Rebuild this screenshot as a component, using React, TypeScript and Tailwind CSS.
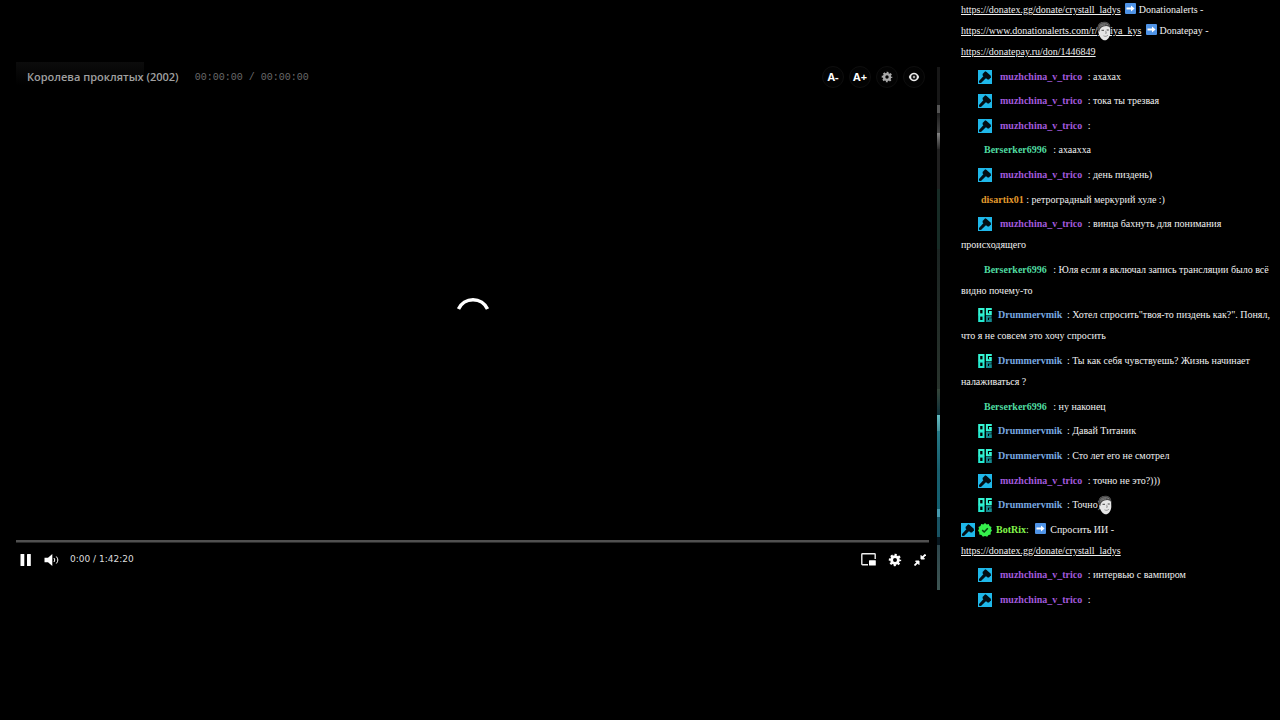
import React from 'react';
import clsx from 'clsx';

type User = 'muzhchina_v_trico' | 'Berserker6996' | 'disartix01' | 'Drummervmik';

interface Message {
  user: User;
  text: string;
  emote?: boolean;
}

const messages: Message[] = [
  { user: 'muzhchina_v_trico', text: 'ахахах' },
  { user: 'muzhchina_v_trico', text: 'тока ты трезвая' },
  { user: 'muzhchina_v_trico', text: '' },
  { user: 'Berserker6996', text: 'ахаахха' },
  { user: 'muzhchina_v_trico', text: 'день пиздень)' },
  { user: 'disartix01', text: 'ретроградный меркурий хуле :)' },
  { user: 'muzhchina_v_trico', text: 'винца бахнуть для понимания происходящего' },
  { user: 'Berserker6996', text: 'Юля если я включал запись трансляции было всё видно почему-то' },
  { user: 'Drummervmik', text: 'Хотел спросить"твоя-то пиздень как?". Понял, что я не совсем это хочу спросить' },
  { user: 'Drummervmik', text: 'Ты как себя чувствуешь? Жизнь начинает налаживаться ?' },
  { user: 'Berserker6996', text: 'ну наконец' },
  { user: 'Drummervmik', text: 'Давай Титаник' },
  { user: 'Drummervmik', text: 'Сто лет его не смотрел' },
  { user: 'muzhchina_v_trico', text: 'точно не это?)))' },
  { user: 'Drummervmik', text: 'Точно)', emote: true },
];

const lastMessages: Message[] = [
  { user: 'muzhchina_v_trico', text: 'интервью с вампиром' },
  { user: 'muzhchina_v_trico', text: '' },
];

const nameStyles: Record<User, string> = {
  muzhchina_v_trico: 'text-[#a259dc] ml-2 mr-[3px]',
  Berserker6996: 'text-[#4fdca0] ml-[23px] mr-1',
  disartix01: 'text-[#e39a2d] ml-5',
  Drummervmik: 'text-[#78a8e0] ml-1.5 mr-0.5',
};

function GavelBadge({ className }: { className?: string }) {
  return (
    <svg viewBox="0 0 14 14" className={clsx('inline-block size-3.5 align-[-4px]', className)} aria-label="Moderator">
      <rect width="14" height="14" fill="#1fb8ea" />
      <g fill="#020d13">
        <path d="M7.2 1.2 8.6 2 12.8 5.8 12.9 7.2 11 9.6 9.6 9.6 4.6 5.4 4.6 4Z" />
        <path d="M6 5.6 8.4 7.8 3 13 1 12.8 1 11Z" />
      </g>
    </svg>
  );
}

function OgBadge({ className }: { className?: string }) {
  return (
    <svg viewBox="0 0 14 14" className={clsx('inline-block size-3.5 align-[-4px]', className)} aria-label="OG">
      <g fill="none" strokeWidth="2">
        <rect x="1.2" y="1" width="4.3" height="5.4" stroke="#35f5d4" />
        <rect x="1.2" y="7.6" width="4.3" height="5.4" stroke="#25ead0" />
        <path d="M13.8 1H8.9V6.2H12.8V4H11" stroke="#35f5d4" />
        <path d="M13.6 8.8H9V13H12.8V11.2H11" stroke="#148a90" />
      </g>
    </svg>
  );
}

function VerifiedBadge() {
  return (
    <svg viewBox="0 0 14 14" className="inline-block size-3.5 align-[-4px] ml-[3px]" aria-label="Verified">
      <path
        d="M7 0 8.7 1.4 10.8 1 11.5 3 13.5 4 13 6 14 7.5 12.7 9.3 12.7 11.4 10.5 12 9.2 13.8 7 13 4.9 13.8 3.5 12 1.3 11.4 1.2 9.3 0 7.5 1 6 .5 4 2.5 3 3.2 1 5.3 1.4Z"
        fill="#35ef4c"
      />
      <path d="M4.2 7.1 6.2 9 9.8 5.3" stroke="#073d0d" strokeWidth="1.5" fill="none" />
    </svg>
  );
}

function ArrowEmoji() {
  return (
    <svg viewBox="0 0 11 11" className="ml-0.5 inline-block size-[11px] align-[-1px]" aria-label="➡️">
      <rect width="11" height="11" rx="1" fill="#4f93e6" />
      <path d="M1.5 4.6H6V2.6L9.6 5.5 6 8.4V6.4H1.5Z" fill="#fff" />
    </svg>
  );
}

function FaceEmote({ className }: { className?: string }) {
  return (
    <svg viewBox="0 0 14 20" className={className} aria-label="Emote">
      <path d="M1 9C0 4 3 1 7 1S13.5 4 13.2 8L13.3 12C13 16 10.5 19.3 8 19.3 5 19.3 2.5 16 1.5 12Z" fill="#e6e6e6" />
      <path d="M1 10C-.6 4 2.5 1 7 .8 11 .7 13.6 3 13.3 7 11.5 4.8 9 4.4 6.5 5.6 4 6.6 2.5 8 2.3 11Z" fill="#484848" />
      <path d="M2.5 4.5C5 2.5 8 2.2 11 3.6M2 6.5C4 4.5 6 4 8 4" stroke="#8b8b8b" strokeWidth=".8" fill="none" />
      <path d="M4.5 9.3H7M9.7 9H11.8" stroke="#444" strokeWidth="1" />
      <path d="M8.6 9.8 9.4 12.2H8M6.5 14.8C8.3 15.8 10 15.4 11 14" stroke="#888" strokeWidth=".8" fill="none" />
    </svg>
  );
}

function GearIcon({ className }: { className?: string }) {
  return (
    <svg viewBox="0 0 14 14" className={className}>
      <g fill="none" stroke="currentColor">
        <circle cx="7" cy="7" r="5" strokeWidth="2.4" strokeDasharray="2.1 1.827" strokeDashoffset="1.05" />
        <circle cx="7" cy="7" r="3.4" strokeWidth="2.8" />
      </g>
    </svg>
  );
}

function ChatMessage({ user, text, emote }: Message) {
  return (
    <li>
      {user === 'muzhchina_v_trico' && <GavelBadge className="ml-[17px]" />}
      {user === 'Drummervmik' && <OgBadge className="ml-[17px]" />}
      <span className={clsx('font-bold', nameStyles[user])}>{user}</span>
      {' : '}
      {text}
      {emote && (
        <span className="relative">
          <FaceEmote className="absolute -left-[3px] -top-1 h-5 w-3.5" />
        </span>
      )}
    </li>
  );
}

function Chat() {
  return (
    <aside className="w-1/4 shrink-0 pl-px pr-1">
      <ul className="-mt-px flex h-[611px] flex-col justify-between font-['Liberation_Serif',serif] text-[10px] leading-[21px] text-[#f0f0f0]">
        <li>
          <a href="#donatex" className="underline">https://donatex.gg/donate/crystall_ladys</a>{' '}
          <ArrowEmoji /> Donationalerts -<br />
          <a href="#donationalerts" className="relative underline">
            https://www.donationalerts.com/r/yuliya_kys
            <FaceEmote className="absolute right-[30px] -top-1 h-5 w-3.5" />
          </a>{' '}
          <ArrowEmoji /> Donatepay -<br />
          <a href="#donatepay" className="underline">https://donatepay.ru/don/1446849</a>
        </li>
        {messages.map((message, i) => (
          <ChatMessage key={i} {...message} />
        ))}
        <li>
          <GavelBadge />
          <VerifiedBadge />
          <span className="ml-1 font-bold text-[#83f64b]">BotRix</span>
          <span className="mr-1 text-[#b5eea0]">:</span>
          <ArrowEmoji /> <span className="ml-0.5">Спросить ИИ -</span>
          <br />
          <a href="#donatex" className="underline">https://donatex.gg/donate/crystall_ladys</a>
        </li>
        {lastMessages.map((message, i) => (
          <ChatMessage key={i} {...message} />
        ))}
      </ul>
    </aside>
  );
}

const roundButton = 'flex size-[22px] items-center justify-center rounded-full border border-[#0e0e0e] bg-[#030303]';

function PlayerHeader() {
  return (
    <header className="flex h-[30px] items-center bg-[linear-gradient(#0c0c0c,#000)] bg-[length:128px_24px] bg-no-repeat pl-[11px] pr-1">
      <h1 className="font-['Open_Sans',sans-serif] text-[11px] font-semibold text-[#a0a0a0]">Королева проклятых (2002)</h1>
      <span className="ml-4 font-['Liberation_Mono',monospace] text-[10px] text-[#6a6a6a]">00:00:00 / 00:00:00</span>
      <div className="ml-auto flex gap-[5px] font-['Open_Sans',sans-serif] text-[11px] font-bold text-white">
        <button className={roundButton}>A-</button>
        <button className={roundButton}>A+</button>
        <button className={roundButton} aria-label="Настройки">
          <GearIcon className="size-3 text-[#aaa]" />
        </button>
        <button className={roundButton} aria-label="Показать">
          <svg viewBox="0 0 12 12" className="size-3">
            <path d="M.8 6C2 3 4 1.8 6 1.8S10 3 11.2 6C10 9 8 10.2 6 10.2S2 9 .8 6Z" fill="#eee" />
            <circle cx="6" cy="6" r="2.8" fill="#111" />
            <circle cx="6" cy="6" r="1.2" fill="#aaa" />
          </svg>
        </button>
      </div>
    </header>
  );
}

function PlayerControls() {
  return (
    <footer>
      <div className="h-[3px] border-b border-[#292929] bg-[#505050]" />
      <div className="flex h-[33px] items-center pl-1 pr-[3px] text-white">
        <button aria-label="Пауза">
          <svg viewBox="0 0 12 12" className="size-3" fill="currentColor">
            <rect x=".5" width="3.8" height="12" rx=".5" />
            <rect x="7" width="3.8" height="12" rx=".5" />
          </svg>
        </button>
        <button aria-label="Громкость" className="ml-3">
          <svg viewBox="0 0 16 12" className="h-3 w-4" fill="currentColor">
            <path d="M.5 3.7H4L8.3 0V12L4 8.3H.5Z" />
            <path d="M10 4Q11.6 6 10 8M12.3 2.5Q15.4 6 12.3 9.5" fill="none" stroke="currentColor" strokeWidth="1" />
          </svg>
        </button>
        <span className="ml-2.5 font-['DejaVu_Sans',sans-serif] text-[9px] text-[#ddd]">0:00 / 1:42:20</span>
        <div className="ml-auto flex items-center gap-3">
          <button aria-label="Картинка в картинке">
            <svg viewBox="0 0 15 13" className="h-[13px] w-[15px]">
              <path d="M7 11.7H1.5Q.8 11.7.8 11V1.5Q.8.8 1.5.8H13.5Q14.2.8 14.2 1.5V6" fill="none" stroke="#eee" strokeWidth="1.4" />
              <rect x="8" y="7.2" width="6.8" height="5.2" rx=".5" fill="#fff" />
            </svg>
          </button>
          <button aria-label="Качество">
            <GearIcon className="size-3.5" />
          </button>
          <button aria-label="Свернуть">
            <svg viewBox="0 0 12 12" className="size-3" fill="#fff" stroke="#fff">
              <path d="M7 1.5V5H10.5Z" />
              <path d="M8 4 11.5.5" strokeWidth="1.8" />
              <path d="M1.5 7H5V10.5Z" />
              <path d="M4 8 .5 11.5" strokeWidth="1.8" />
            </svg>
          </button>
        </div>
      </div>
    </footer>
  );
}

function Player() {
  return (
    <section className="flex min-w-0 flex-1 flex-col">
      <PlayerHeader />
      <div className="flex h-[448px] items-center justify-center pb-1.5">
        <svg viewBox="0 0 34 34" className="size-[34px]" aria-label="Загрузка">
          <path d="M2.5 13A16 16 0 0 1 31.5 13" fill="none" stroke="#fff" strokeWidth="3.5" />
        </svg>
      </div>
      <PlayerControls />
    </section>
  );
}

export default function App() {
  return (
    <div className="flex min-h-screen overflow-hidden bg-black">
      <main className="flex min-w-0 flex-1 items-start pl-4 pr-5 pt-[62px]">
        <Player />
        {/* edge of the stream picture behind the player */}
        <div className="ml-2 mt-[5px] flex h-[523px] w-[3px] flex-col">
          <div className="h-[38px] bg-[#171717]" />
          <div className="h-2 bg-[#555]" />
          <div className="h-5 bg-linear-to-b from-[#1d1d1d] to-[#444]" />
          <div className="h-4 bg-linear-to-b from-[#858585] to-[#292929]" />
          <div className="h-10 bg-[#202020]" />
          <div className="h-[60px] bg-[#172c26]" />
          <div className="h-[140px] bg-linear-to-b from-[#1b2422] to-[#29342d]" />
          <div className="h-[26px] bg-linear-to-b from-[#354539] to-[#0b3039]" />
          <div className="h-4 bg-linear-to-b from-[#62bdc2] to-[#45909a]" />
          <div className="flex-1 bg-linear-to-b from-[#257a88] via-[#195e6d] to-[#126070]" />
          <div className="h-2 bg-[#4599ae]" />
          <div className="h-5 bg-[#185363]" />
          <div className="h-2 bg-[#06151d]" />
          <div className="h-[45px] bg-linear-to-b from-[#2d464c] to-[#3e5552]" />
        </div>
      </main>
      <Chat />
    </div>
  );
}
